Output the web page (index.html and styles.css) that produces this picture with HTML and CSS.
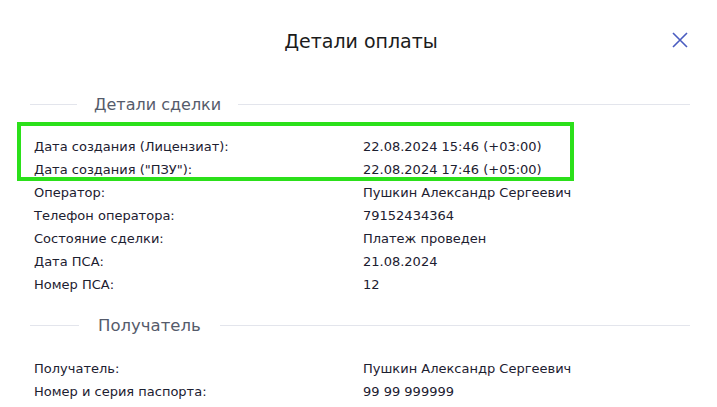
FILE: index.html
```html
<!DOCTYPE html>
<html lang="ru">
<head>
<meta charset="utf-8">
<title>Детали оплаты</title>
<link rel="stylesheet" href="styles.css">
</head>
<body>
<div class="modal">
  <header class="modal-head">
    <h1 class="modal-title">Детали оплаты</h1>
    <button class="close-btn" aria-label="Закрыть">
      <svg width="16" height="16" viewBox="0 0 16 16"><path d="M1 1 L15 15 M15 1 L1 15" stroke="#4a5cc0" stroke-width="1.6" fill="none"/></svg>
    </button>
  </header>

  <section class="section">
    <div class="section-head"><span class="line short"></span><span class="section-title">Детали сделки</span><span class="line"></span></div>
    <div class="rows">
      <div class="highlight"></div>
      <div class="row"><span class="label">Дата создания (Лицензиат):</span><span class="value">22.08.2024 15:46 (+03:00)</span></div>
      <div class="row"><span class="label">Дата создания ("ПЗУ"):</span><span class="value">22.08.2024 17:46 (+05:00)</span></div>
      <div class="row"><span class="label">Оператор:</span><span class="value">Пушкин Александр Сергеевич</span></div>
      <div class="row"><span class="label">Телефон оператора:</span><span class="value">79152434364</span></div>
      <div class="row"><span class="label">Состояние сделки:</span><span class="value">Платеж проведен</span></div>
      <div class="row"><span class="label">Дата ПСА:</span><span class="value">21.08.2024</span></div>
      <div class="row"><span class="label">Номер ПСА:</span><span class="value">12</span></div>
    </div>
  </section>

  <section class="section second">
    <div class="section-head"><span class="line short"></span><span class="section-title">Получатель</span><span class="line"></span></div>
    <div class="rows">
      <div class="row"><span class="label">Получатель:</span><span class="value">Пушкин Александр Сергеевич</span></div>
      <div class="row"><span class="label">Номер и серия паспорта:</span><span class="value">99 99 999999</span></div>
      <div class="row"><span class="label">Кем выдан:</span><span class="value">ОВД</span></div>
    </div>
  </section>
</div>
</body>
</html>
```

FILE: styles.css
```css
html, body {
  margin: 0;
  padding: 0;
  background: #ffffff;
  overflow: hidden;
}
body {
  font-family: "DejaVu Sans", Verdana, sans-serif;
  color: #1c2030;
}
.modal {
  width: 717px;
  padding: 0 27px 0 30px;
  box-sizing: border-box;
}
.modal-head {
  height: 84px;
  display: flex;
  align-items: center;
  justify-content: center;
  position: relative;
}
.modal-title {
  margin: 0;
  font-size: 19px;
  font-weight: normal;
  color: #1b1b1b;
  padding-left: 2px;
  position: relative;
  top: -1px;
}
.close-btn {
  position: absolute;
  right: 2px;
  top: 32px;
  width: 16px;
  height: 16px;
  padding: 0;
  border: 0;
  background: none;
  display: flex;
}
.section-head {
  display: flex;
  align-items: center;
  height: 40px;
}
.line {
  flex: 1;
  height: 1px;
  background: #e3e5ec;
}
.line.short {
  flex: 0 0 47px;
}
.section-title {
  padding: 0 17px;
  font-size: 16px;
  color: #555b6b;
}
.rows {
  position: relative;
  padding: 11px 0 0 4px;
}
.row {
  display: grid;
  grid-template-columns: 329px 1fr;
  height: 23px;
  align-items: center;
  font-size: 13px;
}
.highlight {
  position: absolute;
  left: -13px;
  top: -2px;
  width: 549px;
  height: 51px;
  border: 4px solid #2be01a;
}
.second {
  margin-top: 9px;
}
.second .line.short {
  flex-basis: 49px;
}
.second .section-title {
  padding: 0 19px;
  font-size: 16.5px;
}
.second .rows {
  padding-top: 12px;
}
```
